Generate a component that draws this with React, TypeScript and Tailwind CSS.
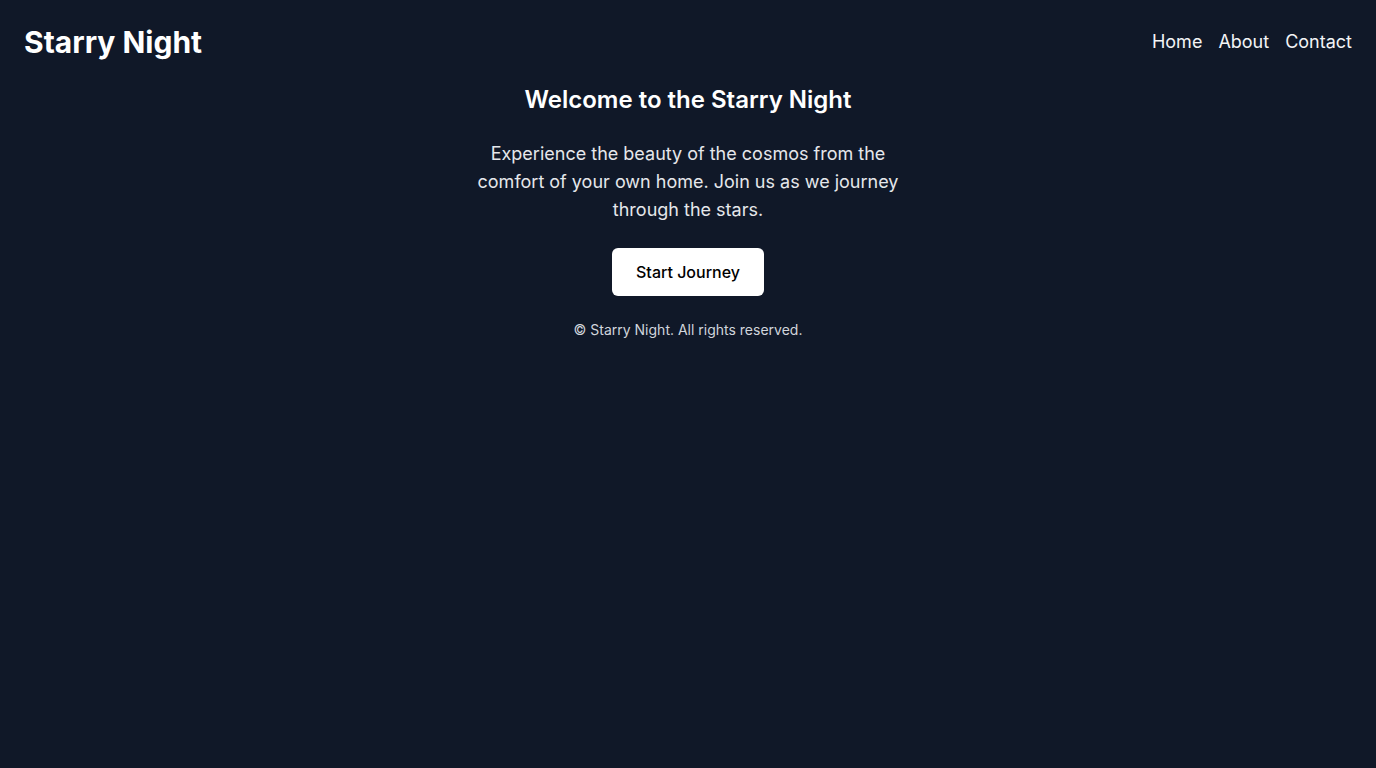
const App = () => {
  const links = ["Home", "About", "Contact"];

  return (
    <div className="min-h-screen bg-gray-900 text-white font-['Inter',sans-serif]">
      <header className="flex items-center justify-between p-6">
        <h1 className="text-3xl font-bold">Starry Night</h1>
        <nav className="flex gap-4 text-lg">
          {links.map((link) => (
            <a key={link} href="#" className="text-gray-100 hover:text-white">
              {link}
            </a>
          ))}
        </nav>
      </header>
      <main className="flex flex-col items-center text-center">
        <h2 className="text-2xl font-semibold mb-6">Welcome to the Starry Night</h2>
        <p className="max-w-md text-lg leading-7 text-gray-200 mb-6">
          Experience the beauty of the cosmos from the comfort of your own home. Join us as we
          journey through the stars.
        </p>
        <button className="rounded-md bg-white px-6 py-3 font-medium text-black">
          Start Journey
        </button>
        <footer className="mt-6 text-sm text-gray-300">© Starry Night. All rights reserved.</footer>
      </main>
    </div>
  );
};

export default App;
